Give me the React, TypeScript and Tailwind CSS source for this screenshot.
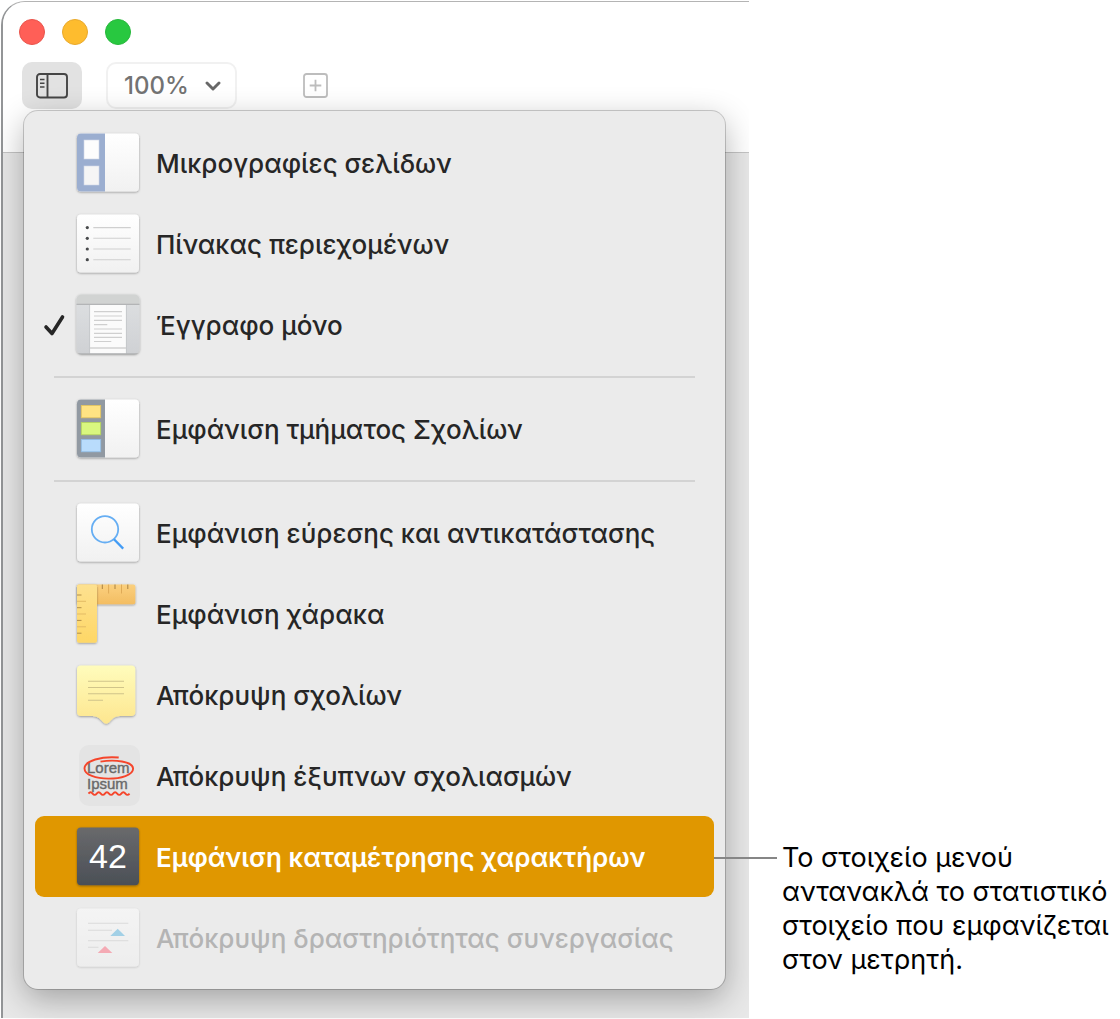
import React from "react";

function Defs() {
  return (
    <svg width="0" height="0" className="absolute" aria-hidden="true">
      <defs>
        <linearGradient id="paper" x1="0" y1="0" x2="0" y2="1">
          <stop offset="0" stopColor="#ffffff" />
          <stop offset="1" stopColor="#f1f1f1" />
        </linearGradient>
        <linearGradient id="slate" x1="0" y1="0" x2="0" y2="1">
          <stop offset="0" stopColor="#696a6c" />
          <stop offset="1" stopColor="#4b4f56" />
        </linearGradient>
        <linearGradient id="note" x1="0" y1="0" x2="0" y2="1">
          <stop offset="0" stopColor="#fffcbc" />
          <stop offset="1" stopColor="#fde68f" />
        </linearGradient>
        <linearGradient id="rulerV" x1="0" y1="0" x2="0" y2="1">
          <stop offset="0" stopColor="#fde190" />
          <stop offset="1" stopColor="#fed766" />
        </linearGradient>
        <linearGradient id="rulerH" x1="0" y1="0" x2="0" y2="1">
          <stop offset="0" stopColor="#fbd07e" />
          <stop offset="1" stopColor="#f3bd62" />
        </linearGradient>
        <linearGradient id="side" x1="0" y1="0" x2="0" y2="1">
          <stop offset="0" stopColor="#dee0e2" />
          <stop offset="1" stopColor="#cfd1d4" />
        </linearGradient>
        <filter id="drop" x="-10%" y="-10%" width="120%" height="120%">
          <feDropShadow dx="0" dy="0.8" stdDeviation="0.8" floodColor="#000" floodOpacity="0.38" />
        </filter>
      </defs>
    </svg>
  );
}

function Icon({ children, faded = false }: { children: React.ReactNode; faded?: boolean }) {
  return (
    <svg width="64" height="61" viewBox="0 0 64 61" fill="none" className={faded ? "shrink-0 overflow-visible opacity-45" : "shrink-0 overflow-visible"} aria-hidden="true">
      {children}
    </svg>
  );
}

const Card = () => <rect x="1" y="1.5" width="62" height="58" rx="4" fill="url(#paper)" filter="url(#drop)" />;

const Thumbnails = () => (
  <Icon>
    <Card />
    <path d="M29 1.5H5a4 4 0 0 0-4 4v50a4 4 0 0 0 4 4h24z" fill="#9baed0" />
    <rect x="8" y="8" width="15" height="19" fill="#fdfdfd" stroke="#cfd8e8" strokeWidth="0.6" />
    <rect x="8" y="34" width="15" height="19" fill="#f5f5f5" stroke="#cfd8e8" strokeWidth="0.6" />
  </Icon>
);

const Contents = () => (
  <Icon>
    <Card />
    {[14.6, 25.3, 36, 46.7].map((y) => (
      <g key={y}>
        <circle cx="11.3" cy={y} r="1.6" fill="#47494b" />
        <path d={`M17.3 ${y}H54.7`} stroke="#cfcfcf" strokeWidth="1.1" />
      </g>
    ))}
  </Icon>
);

const DocumentOnly = () => (
  <Icon>
    <rect x="0.5" y="0.5" width="63" height="59.5" rx="5" fill="url(#side)" filter="url(#drop)" />
    <path d="M.5 10V5.5a5 5 0 0 1 5-5h53a5 5 0 0 1 5 5V10z" fill="#d1d3d2" />
    <path d="M.5 10.3h63" stroke="#a9abac" />
    <rect x="14" y="11" width="36" height="48.5" fill="#fbfbfb" />
    <path d="M13.6 11v48.5M50.4 11v48.5" stroke="#c2c4c6" strokeWidth="0.8" />
    <path d="M18 17.7h28M18 22h28M18 26.3h28M18 30.6h13.3M18 35h28M18 39.3h28M18 43.4h28M18 47.5h17.3" stroke="#cfcfcf" strokeWidth="1.2" />
    <path d="M14 54h36" stroke="#d2d2d2" strokeWidth="1.6" />
    <path d="M3 59.7h58" stroke="#a9abac" strokeWidth="0.8" />
  </Icon>
);

const Comments = () => (
  <Icon>
    <Card />
    <path d="M29 1.5H5a4 4 0 0 0-4 4v50a4 4 0 0 0 4 4h24z" fill="#9199a2" />
    <rect x="5.3" y="7.4" width="19.4" height="12.4" fill="#ffe383" stroke="#e4c45c" strokeWidth="0.8" />
    <rect x="5.3" y="24.4" width="19.4" height="12.4" fill="#d9f77f" stroke="#b4d45b" strokeWidth="0.8" />
    <rect x="5.3" y="41.4" width="19.4" height="12.4" fill="#b9dcfc" stroke="#90bce6" strokeWidth="0.8" />
  </Icon>
);

const Find = () => (
  <Icon>
    <Card />
    <circle cx="29" cy="27.3" r="13.2" stroke="#66aef3" strokeWidth="1.8" />
    <path d="M38 37.2l9.2 9.4" stroke="#439cf5" strokeWidth="2.3" />
  </Icon>
);

const Ruler = () => (
  <Icon>
    <rect x="1" y="1.5" width="58.3" height="19.8" rx="2" fill="url(#rulerH)" filter="url(#drop)" />
    <path d="M26.3 1.5v4.5M39 1.5v4.5M51.8 1.5v4.5" stroke="#a98243" strokeWidth="1" />
    <path d="M32.6 1.5v9M45.5 1.5v9" stroke="#dfaa57" strokeWidth="1" />
    <rect x="1" y="1.5" width="20" height="58.2" rx="2" fill="url(#rulerV)" filter="url(#drop)" />
    <path d="M1 12h4.5M1 24.7h4.5M1 37.4h4.5M1 50.2h4.5" stroke="#b3904b" strokeWidth="1" />
    <path d="M1 18.3h9M1 31h9M1 43.8h9" stroke="#e3bb64" strokeWidth="1" />
  </Icon>
);

const Note = () => (
  <Icon>
    <path d="M5 1.5h50.3a4 4 0 0 1 4 4V48a4 4 0 0 1-4 4H46c-7 0-9 2-12.5 6q-3.3 3.6-6.6 0C23.5 54 21 52 14.5 52H5a4 4 0 0 1-4-4V5.5a4 4 0 0 1 4-4z" fill="url(#note)" filter="url(#drop)" />
    <path d="M12 17.3h36M12 23.5h36M12 29.8h36M12 36.2h15" stroke="#d0c48a" strokeWidth="1.1" />
  </Icon>
);

const Smart = () => (
  <Icon>
    <rect x="3" y="0" width="61" height="61" rx="10" fill="#e4e4e4" />
    <g fontSize="15" fontWeight="400" fill="#696969" stroke="#696969" strokeWidth="0.4" fontFamily="Liberation Sans, sans-serif">
      <text x="11" y="28.4">Lorem</text>
      <text x="11" y="44.4">Ipsum</text>
    </g>
    <path d="M24.5 16.6c14-2.200 32.300-.5 32.600 7 .2 6.500-12.500 10-24.600 10S8.300 30 8.500 23.300c.3-7.500 17-12.300 34.200-10.800" stroke="#f5452b" strokeWidth="1.9" />
    <path d="M12.500 48.600q2-2.600 4.100 0t4.100 0 4.100 0 4.100 0 4.100 0 4.100 0 4.100 0 4.100 0 4.100 0 4.100 0" stroke="#f5452b" strokeWidth="1.9" />
  </Icon>
);

const Count = () => (
  <Icon>
    <rect x="1" y="1.5" width="62" height="57.8" rx="4" fill="url(#slate)" filter="url(#drop)" />
    <text x="13" y="41.5" fontSize="34" fontWeight="400" fill="#fff" fontFamily="Liberation Sans, sans-serif">42</text>
  </Icon>
);

const Activity = () => (
  <Icon faded>
    <Card />
    <path d="M12 16.3h40.3M12 23.3h24M12 33.7h40.3M12 40.3h10.5" stroke="#c6c6c6" strokeWidth="1.1" />
    <path d="M34.3 29H49l-7.300-7.300z" fill="#4cb1e2" />
    <path d="M21.700 46h14.600L29 39z" fill="#ff5d72" />
  </Icon>
);

type Item = { label: string; icon: () => React.ReactElement; checked?: boolean; active?: boolean; disabled?: boolean };

const groups: Item[][] = [
  [
    { label: "Μικρογραφίες σελίδων", icon: Thumbnails },
    { label: "Πίνακας περιεχομένων", icon: Contents },
    { label: "Έγγραφο μόνο", icon: DocumentOnly, checked: true },
  ],
  [{ label: "Εμφάνιση τμήματος Σχολίων", icon: Comments }],
  [
    { label: "Εμφάνιση εύρεσης και αντικατάστασης", icon: Find },
    { label: "Εμφάνιση χάρακα", icon: Ruler },
    { label: "Απόκρυψη σχολίων", icon: Note },
    { label: "Απόκρυψη έξυπνων σχολιασμών", icon: Smart },
    { label: "Εμφάνιση καταμέτρησης χαρακτήρων", icon: Count, active: true },
    { label: "Απόκρυψη δραστηριότητας συνεργασίας", icon: Activity, disabled: true },
  ],
];

function MenuRow({ item }: { item: Item }) {
  const Glyph = item.icon;
  const tone = item.active
    ? "bg-[#e09700] font-semibold text-white"
    : item.disabled
      ? "font-medium text-[#b4b4b4]"
      : "font-medium text-[#262626]";
  return (
    <button
      type="button"
      role="menuitem"
      disabled={item.disabled}
      className={`flex h-[81px] w-full items-center rounded-[9px] pl-2 text-left text-[26px] whitespace-nowrap ${tone}`}
    >
      <span className="flex w-[33px] shrink-0">
        {item.checked && (
          <svg width="24" height="24" viewBox="0 0 24 24" fill="none" aria-label="✓">
            <path d="M3 14l6 6.500L19.500 4" stroke="#262626" strokeWidth="3.600" strokeLinecap="round" strokeLinejoin="round" />
          </svg>
        )}
      </span>
      <Glyph />
      <span className="ml-4 pt-0.5">{item.label}</span>
    </button>
  );
}

export default function App() {
  return (
    <div className="flex min-h-screen bg-white pb-px font-[Inter,'Noto_Sans',sans-serif]">
      <Defs />
      <main className="relative mt-px ml-px flex min-w-0 flex-1 flex-col rounded-tl-[24px] border-t border-l-2 border-t-[#b4b4b4] border-l-[#939597] bg-[#e8e8e8]">
        <header className="rounded-tl-[22px] border-b border-[#c4c4c4] bg-white pt-[17px] pb-[43px]">
          <div className="flex gap-[17px] pl-4">
            <button type="button" aria-label="Κλείσιμο" className="size-[26px] rounded-full border border-[#e9534b] bg-[#ff5f57]" />
            <button type="button" aria-label="Ελαχιστοποίηση" className="size-[26px] rounded-full border border-[#e9a92b] bg-[#febc2e]" />
            <button type="button" aria-label="Μεγιστοποίηση" className="size-[26px] rounded-full border border-[#26b83b] bg-[#28c840]" />
          </div>
          <div className="mt-[17px] flex items-center pl-[19px]">
            <button type="button" aria-label="Προβολή" className="flex h-[47px] w-[60px] items-center justify-center rounded-[10px] bg-[#e2e2e2]">
              <svg width="32" height="26" viewBox="0 0 32 26" fill="none" stroke="#454545" aria-hidden="true">
                <rect x="1" y="1" width="30" height="23.500" rx="3" strokeWidth="1.900" />
                <path d="M11.500 1v23.500" strokeWidth="1.900" />
                <path d="M4 6.500h4.500M4 10.300h4.500M4 14.100h4.500" strokeWidth="1.500" />
              </svg>
            </button>
            <div className="relative ml-6 h-[47px] w-[131px]">
              <select aria-label="Ζουμ" className="h-full w-full appearance-none rounded-[10px] border-2 border-[#f1f1f1] bg-white pl-4 text-[24px] font-medium text-[#737373]">
                <option>100%</option>
              </select>
              <svg width="16" height="12" viewBox="0 0 16 12" fill="none" className="pointer-events-none absolute top-[18px] right-4" aria-hidden="true">
                <path d="M2 3l6 6 6-6" stroke="#686868" strokeWidth="2.900" strokeLinecap="round" strokeLinejoin="round" />
              </svg>
            </div>
            <button type="button" aria-label="Προσθήκη" className="ml-[66px]">
              <svg width="25" height="26" viewBox="0 0 25 26" fill="none" stroke="#bdbdbd" aria-hidden="true">
                <rect x="1" y="1" width="23" height="23" rx="2.500" strokeWidth="1.800" />
                <path d="M12.500 6.700v11.600M6.700 12.500h11.600" strokeWidth="1.800" />
              </svg>
            </button>
          </div>
        </header>
        <div
          role="menu"
          className="absolute top-[109px] right-6 left-[21px] rounded-[14px] bg-[#ebebeb] px-[11px] py-[11px] shadow-[0_0_0_1px_rgba(0,0,0,0.19),0_10px_32px_rgba(0,0,0,0.3)]"
        >
          {groups.map((group, i) => (
            <React.Fragment key={i}>
              {i > 0 && (
                <div role="separator" className="flex h-[23px] items-center px-[19px]">
                  <div className="h-0.5 w-full bg-[#d3d3d3]" />
                </div>
              )}
              {group.map((item) => (
                <MenuRow key={item.label} item={item} />
              ))}
            </React.Fragment>
          ))}
        </div>
      </main>
      <aside className="relative z-10 w-[371px] shrink-0 bg-white pt-[841px] pl-[33px]">
        <div className="absolute top-[857px] -left-[35px] h-0.5 w-[63px] bg-[#868686]" />
        <p className="text-[27px] leading-[34px] text-black">
          Το στοιχείο μενού
          <br />
          αντανακλά το στατιστικό
          <br />
          στοιχείο που εμφανίζεται
          <br />
          στον μετρητή.
        </p>
      </aside>
    </div>
  );
}
